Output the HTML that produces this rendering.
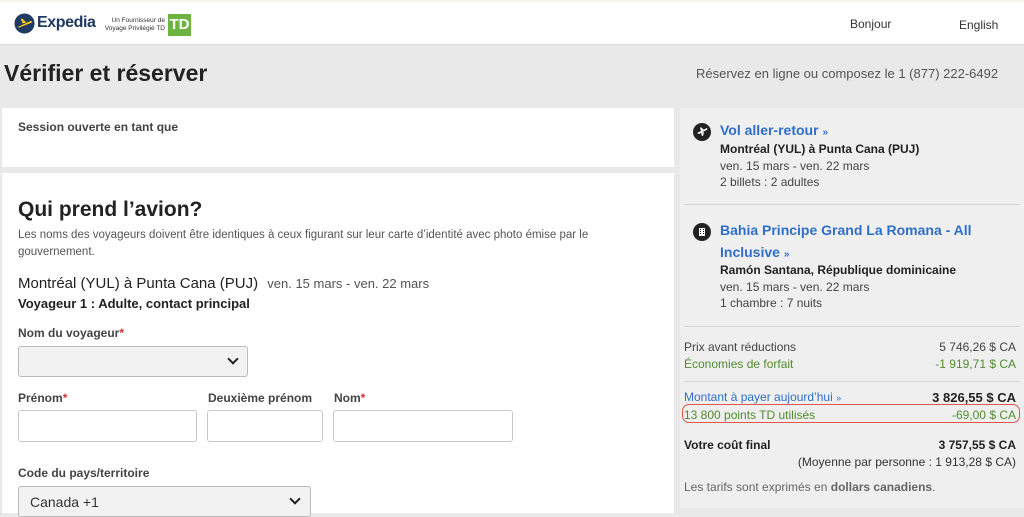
<!DOCTYPE html>
<html><head><meta charset="utf-8"><style>
*{margin:0;padding:0;box-sizing:border-box}
body{width:1024px;height:508px;overflow:hidden;background:#e9e9e9;font-family:"Liberation Sans",Arial,sans-serif;color:#333;position:relative}
.a{position:absolute;white-space:nowrap}
.hdr{position:absolute;left:0;top:0;width:1024px;height:45px;background:#fff;border-top:2px solid #fbf6ec;border-bottom:1px solid #ddd}
.card{position:absolute;background:#fff;left:2px;width:672px}
.lbl{font-size:12px;font-weight:bold;color:#444}
.lbl b{color:#c33}
.inp{position:absolute;background:#fff;border:1px solid #c8c8c8;border-radius:3px;height:32px}
.sel{position:absolute;background:#f2f2f2;border:1px solid #bbb;border-radius:3px}
.chev{position:absolute;width:8px;height:8px;border-right:2.5px solid #222;border-bottom:2.5px solid #222;transform:rotate(45deg)}
.r{font-size:12px}
.right{position:absolute;left:680px;top:108px;width:344px;height:400px;background:#efefef}
.blue{color:#2f6fcc}.green{color:#4f8c2f}
</style></head><body>
<div class="hdr">
 <svg class="a" style="left:14px;top:11px" width="21" height="21" viewBox="0 0 22 22"><circle cx="11" cy="11" r="10.5" fill="#1f3a63"/><path d="M3 15 L18 8 L19 10 L6 15 Z" fill="#f5c518"/><path d="M9 11 L7 6 L9 6 L13 10 Z" fill="#f5c518"/></svg>
 <div class="a" style="left:37px;top:12px;font-size:16px;color:#1f3a63;font-weight:bold;letter-spacing:-0.4px">Expedia</div>
 <div class="a" style="left:101px;top:15px;font-size:6.5px;line-height:8px;color:#333;text-align:right;width:64px">Un Fournisseur de<br>Voyage Privilégié TD</div>
 <div class="a" style="left:168px;top:12px;width:23px;height:22px;background:#6db33f;color:#fff;font-weight:bold;font-size:15px;text-align:center;line-height:22px">TD</div>
 <div class="a" style="left:850px;top:15px;font-size:12px;color:#333">Bonjour</div>
 <div class="a" style="left:959px;top:16px;font-size:12px;color:#333">English</div>
</div>
<div class="a" style="left:4px;top:60px;font-size:23px;font-weight:bold;color:#222">Vérifier et réserver</div>
<div class="a" style="left:696px;top:66px;font-size:13px;color:#555">Réservez en ligne ou composez le 1 (877) 222-6492</div>
<div class="card" style="top:108px;height:59px"><div class="a lbl" style="left:16px;top:12px">Session ouverte en tant que</div></div>
<div class="card" style="top:173px;height:340px">
 <div class="a" style="left:16px;top:25px;font-size:21px;font-weight:bold;color:#222">Qui prend l’avion?</div>
 <div class="a" style="left:16px;top:54px;font-size:11.5px;line-height:17px;color:#555;white-space:normal;width:610px">Les noms des voyageurs doivent être identiques à ceux figurant sur leur carte d’identité avec photo émise par le gouvernement.</div>
 <div class="a" style="left:16px;top:102px;font-size:15px;color:#222">Montréal (YUL) à Punta Cana (PUJ) <span style="font-size:13px;color:#555;margin-left:5px">ven. 15 mars - ven. 22 mars</span></div>
 <div class="a" style="left:16px;top:123px;font-size:13px;font-weight:bold;color:#222">Voyageur 1 : Adulte, contact principal</div>
 <div class="a lbl" style="left:16px;top:153px">Nom du voyageur<b>*</b></div>
 <div class="sel" style="left:16px;top:173px;width:230px;height:31px"><div class="chev" style="left:210px;top:8px"></div></div>
 <div class="a lbl" style="left:16px;top:218px">Prénom<b>*</b></div>
 <div class="a lbl" style="left:206px;top:218px">Deuxième prénom</div>
 <div class="a lbl" style="left:332px;top:218px">Nom<b>*</b></div>
 <div class="inp" style="left:16px;top:237px;width:179px"></div>
 <div class="inp" style="left:205px;top:237px;width:116px"></div>
 <div class="inp" style="left:331px;top:237px;width:180px"></div>
 <div class="a lbl" style="left:16px;top:293px">Code du pays/territoire</div>
 <div class="sel" style="left:16px;top:313px;width:293px;height:31px"><div class="a" style="left:11px;top:7px;font-size:14px;color:#333">Canada +1</div><div class="chev" style="left:272px;top:8px"></div></div>
</div>
<div class="right">
 <svg class="a" style="left:13px;top:15px" width="18" height="18" viewBox="0 0 18 18"><circle cx="9" cy="9" r="9" fill="#222"/><path d="M4 10 L14 5 L14.5 6.5 L6 11 Z M8 8 L7 4.5 L8.5 4.5 L11 7 Z M8 10 L9 13 L10 13 L11 9 Z" fill="#fff"/></svg>
 <div class="a blue" style="left:40px;top:14px;font-size:14px;font-weight:bold">Vol aller-retour <span style="font-size:10px">»</span></div>
 <div class="a r" style="left:40px;top:34px;font-weight:bold;color:#222">Montréal (YUL) à Punta Cana (PUJ)</div>
 <div class="a r" style="left:40px;top:51px;color:#444">ven. 15 mars - ven. 22 mars</div>
 <div class="a r" style="left:40px;top:67px;color:#444">2 billets : 2 adultes</div>
 <div class="a" style="left:4px;top:96px;width:336px;border-top:1px solid #d6d6d6"></div>
 <svg class="a" style="left:13px;top:115px" width="18" height="18" viewBox="0 0 18 18"><circle cx="9" cy="9" r="9" fill="#222"/><rect x="6" y="5" width="6" height="8" fill="#fff"/><path d="M7 6h1v1h-1zM10 6h1v1h-1zM7 8h1v1h-1zM10 8h1v1h-1zM7 10h1v1h-1zM10 10h1v1h-1z" fill="#222"/></svg>
 <div class="a blue" style="left:40px;top:111px;font-size:14px;font-weight:bold;line-height:22px;white-space:normal;width:260px">Bahia Principe Grand La Romana - All Inclusive <span style="font-size:10px">»</span></div>
 <div class="a r" style="left:40px;top:155px;font-weight:bold;color:#222">Ramón Santana, République dominicaine</div>
 <div class="a r" style="left:40px;top:172px;color:#444">ven. 15 mars - ven. 22 mars</div>
 <div class="a r" style="left:40px;top:188px;color:#444">1 chambre : 7 nuits</div>
 <div class="a" style="left:4px;top:218px;width:336px;border-top:1px solid #d6d6d6"></div>
 <div class="a r" style="left:4px;top:232px;color:#444">Prix avant réductions</div><div class="a r" style="right:8px;top:232px;color:#444">5 746,26 $ CA</div>
 <div class="a r green" style="left:4px;top:249px">Économies de forfait</div><div class="a r green" style="right:8px;top:249px">-1 919,71 $ CA</div>
 <div class="a" style="left:4px;top:273px;width:336px;border-top:1px solid #d6d6d6"></div>
 <div class="a r blue" style="left:4px;top:282px">Montant à payer aujourd’hui <span style="font-size:9px">»</span></div><div class="a" style="right:8px;top:282px;font-size:13px;font-weight:bold;color:#222">3 826,55 $ CA</div>
 <div class="a" style="left:2px;top:296px;width:338px;height:19px;border:1.5px solid #e0564a;border-radius:7px"></div>
 <div class="a r green" style="left:4px;top:300px">13 800 points TD utilisés</div><div class="a r green" style="right:8px;top:300px">-69,00 $ CA</div>
 <div class="a r" style="left:4px;top:330px;font-weight:bold;color:#222">Votre coût final</div><div class="a r" style="right:8px;top:330px;font-weight:bold;color:#222">3 757,55 $ CA</div>
 <div class="a r" style="right:8px;top:347px;color:#333">(Moyenne par personne : 1 913,28 $ CA)</div>
 <div class="a r" style="left:4px;top:372px;color:#666">Les tarifs sont exprimés en <b>dollars canadiens</b>.</div>
</div>
</body></html>
